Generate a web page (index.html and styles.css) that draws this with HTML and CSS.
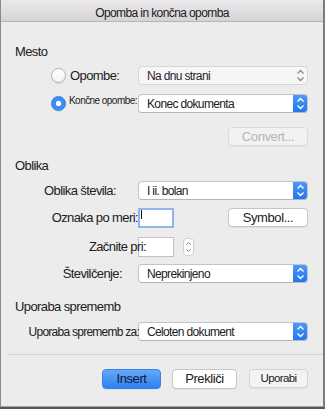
FILE: index.html
```html
<!DOCTYPE html>
<html lang="sl">
<head>
    <meta charset="UTF-8">
    <title>Opomba in končna opomba</title>
    <link rel="stylesheet" href="styles.css">
</head>
<body>
<div class="window">
    <div class="titlebar">Opomba in končna opomba</div>
    <div class="content">
        <div class="group-title mesto">Mesto</div>

        <div class="row row-opombe">
            <div class="radio-label">
                <span class="radio"></span>
                <span>Opombe:</span>
            </div>
            <div class="popup popup-plain">
                <span>Na dnu strani</span>
                <svg class="arrows" viewBox="0 0 15 19" width="15" height="19"><path d="M4.5 7.5 L7.5 4.5 L10.5 7.5 M4.5 11.5 L7.5 14.5 L10.5 11.5" fill="none" stroke="#8a8a8a" stroke-width="1.3"/></svg>
            </div>
        </div>

        <div class="row row-koncne">
            <div class="radio-label small">
                <span class="radio checked"></span>
                <span>Končne opombe:</span>
            </div>
            <div class="popup">
                <span>Konec dokumenta</span>
                <svg class="arrows blue" viewBox="0 0 15 19" width="15" height="19"><path d="M4.5 7.5 L7.5 4.5 L10.5 7.5 M4.5 11.5 L7.5 14.5 L10.5 11.5" fill="none" stroke="#fff" stroke-width="1.4"/></svg>
            </div>
        </div>

        <div class="row-right row-convert">
            <div class="button disabled convert">Convert...</div>
        </div>

        <div class="group-title oblika">Oblika</div>

        <div class="row row-stevila">
            <div class="label lbl-stevila">Oblika števila:</div>
            <div class="popup">
                <span>I ii. bolan</span>
                <svg class="arrows blue" viewBox="0 0 15 19" width="15" height="19"><path d="M4.5 7.5 L7.5 4.5 L10.5 7.5 M4.5 11.5 L7.5 14.5 L10.5 11.5" fill="none" stroke="#fff" stroke-width="1.4"/></svg>
            </div>
        </div>

        <div class="row row-oznaka">
            <div class="label lbl-oznaka">Oznaka po meri:</div>
            <div class="textbox focused"><span class="caret"></span></div>
            <div class="button symbol">Symbol...</div>
        </div>

        <div class="row row-zacnite">
            <div class="label lbl-zacnite">Začnite pri:</div>
            <div class="textbox"></div>
            <div class="stepper">
                <svg viewBox="0 0 10 18" width="10" height="18"><path d="M2.5 6.5 L5 4 L7.5 6.5 M2.5 11.5 L5 14 L7.5 11.5" fill="none" stroke="#7a7a7a" stroke-width="1.1"/></svg>
            </div>
        </div>

        <div class="row row-stevilcenje">
            <div class="label lbl-stevilcenje">Številčenje:</div>
            <div class="popup">
                <span>Neprekinjeno</span>
                <svg class="arrows blue" viewBox="0 0 15 19" width="15" height="19"><path d="M4.5 7.5 L7.5 4.5 L10.5 7.5 M4.5 11.5 L7.5 14.5 L10.5 11.5" fill="none" stroke="#fff" stroke-width="1.4"/></svg>
            </div>
        </div>

        <div class="group-title uporaba">Uporaba sprememb</div>

        <div class="row row-uporaba">
            <div class="label lbl-uporaba">Uporaba sprememb za:</div>
            <div class="popup">
                <span>Celoten dokument</span>
                <svg class="arrows blue" viewBox="0 0 15 19" width="15" height="19"><path d="M4.5 7.5 L7.5 4.5 L10.5 7.5 M4.5 11.5 L7.5 14.5 L10.5 11.5" fill="none" stroke="#fff" stroke-width="1.4"/></svg>
            </div>
        </div>

        <div class="separator"></div>

        <div class="buttons">
            <div class="button primary">Insert</div>
            <div class="button cancel">Prekliči</div>
            <div class="button apply">Uporabi</div>
        </div>
    </div>
</div>
</body>
</html>
```

FILE: styles.css
```css
body {
    margin: 0;
    background: #5e554a;
    font-family: "Liberation Sans", Arial, sans-serif;
    color: #202020;
}
.window {
    width: 325px;
    height: 407px;
    box-sizing: border-box;
    border-left: 1px solid #8c8c8c;
    border-right: 2px solid #7c7c7c;
    border-bottom: 1px solid #a3a3a3;
    background: #ececec;
}
.titlebar {
    height: 21px;
    padding-top: 1px;
    box-sizing: border-box;
    border-bottom: 1px solid #b6b6b6;
    background: linear-gradient(#ebe9eb, #d5d3d5);
    text-align: center;
    font-size: 12px;
    letter-spacing: -0.6px;
    line-height: 24px;
    height: 22px;
    overflow: hidden;
}
.content {
    padding: 0 15px 0 0;
}
.group-title {
    margin-left: 14px;
    font-size: 13px;
    letter-spacing: -0.6px;
    line-height: 16px;
}
.mesto { margin-top: 22px; }
.oblika { margin-top: 12px; }
.uporaba { margin-top: 16px; }

.row {
    display: grid;
    grid-template-columns: 137px 170px;
    align-items: center;
}
.row-opombe { margin-top: 6px; }
.row-koncne { margin-top: 9px; }
.row-stevila { margin-top: 7px; }
.row-oznaka {
    margin-top: 8px;
    grid-template-columns: 137px 36px 1fr;
}
.row-zacnite {
    margin-top: 9px;
    grid-template-columns: 137px 36px 1fr;
}
.row-stevilcenje { margin-top: 7px; }
.row-uporaba { margin-top: 7px; }

.label {
    justify-self: end;
    font-size: 13px;
    letter-spacing: -0.6px;
    line-height: 16px;
    position: relative;
    z-index: 1;
}
.lbl-stevila { margin-right: 22px; }
.lbl-oznaka { margin-right: 0; }
.lbl-zacnite { margin-right: -8px; }
.lbl-stevilcenje { margin-right: 16px; }
.lbl-uporaba {
    margin-right: -1px;
    font-size: 12px;
    letter-spacing: -0.75px;
}

.radio-label {
    display: flex;
    align-items: center;
    gap: 4px;
    padding-left: 50px;
    font-size: 13px;
    letter-spacing: -0.6px;
    line-height: 16px;
}
.radio-label.small {
    font-size: 10px;
    letter-spacing: -0.55px;
    gap: 3px;
}
.radio-label.small span:last-child {
    margin-top: -5px;
}
.radio {
    width: 15px;
    height: 15px;
    box-sizing: border-box;
    border-radius: 50%;
    border: 1px solid #b0b0b0;
    background: linear-gradient(#ffffff, #f4f4f4);
    box-shadow: 0 1px 1px rgba(0, 0, 0, 0.08);
    flex: none;
}
.radio.checked {
    border-color: #2f7fee;
    background: radial-gradient(circle, #ffffff 0 2.5px, #3a8df5 3px);
}

.popup {
    height: 19px;
    box-sizing: border-box;
    display: flex;
    align-items: center;
    justify-content: space-between;
    background: #ffffff;
    border: 1px solid #c4c4c4;
    border-bottom-color: #b4b4b4;
    border-radius: 4px;
    font-size: 12px;
    letter-spacing: -0.65px;
    padding-left: 8px;
    overflow: hidden;
}
.popup-plain {
    background: #f6f6f6;
    border-color: #d6d6d6;
    color: #2a1f2e;
}
.arrows {
    flex: none;
    margin-right: -1px;
}
.arrows.blue {
    background: linear-gradient(#4f9bf8, #1f73ec);
    margin-top: -1px;
    margin-bottom: -1px;
    height: 19px;
}

.row-right {
    display: flex;
    justify-content: flex-end;
}
.row-convert { margin-top: 14px; }

.button {
    height: 19px;
    box-sizing: border-box;
    border: 1px solid #c6c6c6;
    border-radius: 4px;
    background: #ffffff;
    font-size: 13px;
    letter-spacing: -0.4px;
    line-height: 17px;
    text-align: center;
    box-shadow: 0 1px 0 rgba(0, 0, 0, 0.05);
}
.button.disabled {
    background: #f2f2f2;
    border-color: #dadada;
    color: #b5b5b5;
}
.convert { width: 80px; }
.symbol {
    width: 80px;
    justify-self: end;
    margin-top: -1px;
}

.textbox {
    height: 20px;
    box-sizing: border-box;
    background: #ffffff;
    border: 1px solid #c3c3c3;
    position: relative;
}
.textbox.focused {
    border: 2px solid #8fb5ee;
}
.caret {
    display: block;
    width: 1px;
    height: 9px;
    margin: 0 0 0 1px;
    background: #111;
}
.stepper {
    width: 11px;
    height: 18px;
    margin-left: 9px;
    box-sizing: border-box;
    border: 1px solid #cfcfcf;
    border-radius: 4px;
    background: #ffffff;
    display: flex;
    justify-content: center;
}
.stepper svg {
    margin-top: -1px;
}

.separator {
    margin: 13px 0 0 6px;
    border-top: 1px solid #d3d3d3;
    margin-right: -15px;
}

.buttons {
    display: flex;
    justify-content: flex-end;
    margin-top: 14px;
}
.primary {
    width: 59px;
    height: 20px;
    background: linear-gradient(#63a8fa, #2f80f1);
    border-color: #3c82e6;
    color: #101838;
}
.cancel {
    width: 65px;
    height: 20px;
    margin-left: 11px;
}
.apply {
    width: 59px;
    margin-left: 12px;
    background: #f3f3f3;
    border-color: #d3d3d3;
    font-size: 11.5px;
    letter-spacing: -0.6px;
}
```
